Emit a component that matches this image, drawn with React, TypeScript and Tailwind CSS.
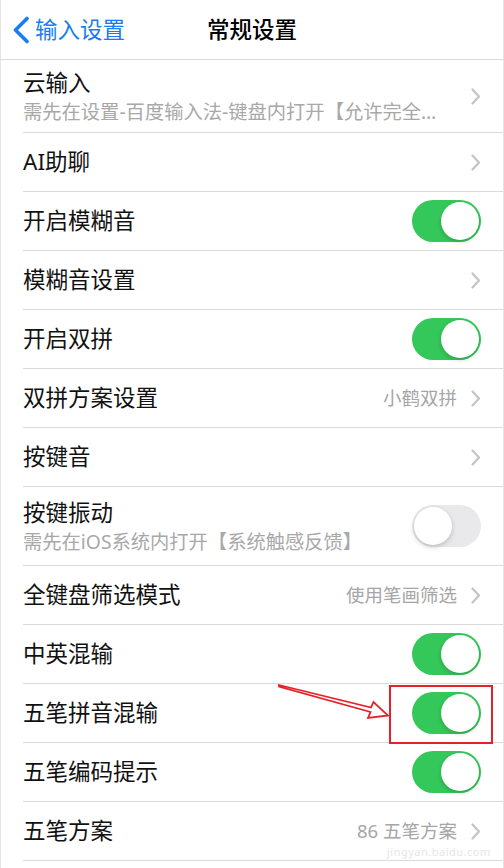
import React from "react";

type Row = {
  label: string;
  sub?: string;
  value?: string;
  toggle?: boolean;
  h: number;
};

const rows: Row[] = [
  { label: "云输入", sub: "需先在设置-百度输入法-键盘内打开【允许完全…", h: 73 },
  { label: "AI助聊", h: 59 },
  { label: "开启模糊音", toggle: true, h: 59 },
  { label: "模糊音设置", h: 59 },
  { label: "开启双拼", toggle: true, h: 59 },
  { label: "双拼方案设置", value: "小鹤双拼", h: 59 },
  { label: "按键音", h: 59 },
  { label: "按键振动", sub: "需先在iOS系统内打开【系统触感反馈】", toggle: false, h: 79 },
  { label: "全键盘筛选模式", value: "使用笔画筛选", h: 59 },
  { label: "中英混输", toggle: true, h: 59 },
  { label: "五笔拼音混输", toggle: true, h: 59 },
  { label: "五笔编码提示", toggle: true, h: 59 },
  { label: "五笔方案", value: "86 五笔方案", h: 59 },
];

const font = { fontFamily: '"Noto Sans", "Noto Sans CJK SC", sans-serif' };

const Chevron = () => (
  <svg width="10" height="17" viewBox="0 0 10 17" className="ml-[14px] shrink-0">
    <polyline points="1.5,1.5 8,8.5 1.5,15.5" fill="none" stroke="#c4c4c8" strokeWidth="2.2" strokeLinecap="round" strokeLinejoin="round" />
  </svg>
);

const Toggle = ({ on }: { on: boolean }) =>
  on ? (
    <div className="relative h-[42px] w-[69px] shrink-0 rounded-full bg-[#34c759]">
      <div className="absolute right-[2px] top-[2px] h-[38px] w-[38px] rounded-full bg-white shadow-[0_2px_4px_rgba(0,0,0,0.18)]" />
    </div>
  ) : (
    <div className="relative h-[42px] w-[69px] shrink-0 rounded-full bg-[#e9e9eb]">
      <div className="absolute left-[2px] top-[2px] h-[38px] w-[38px] rounded-full bg-white shadow-[0_2px_5px_rgba(0,0,0,0.2)]" />
    </div>
  );

export default function App() {
  return (
    <div className="relative h-[868px] w-[504px] overflow-hidden border-x border-[#e4e4e4] bg-white" style={font}>
      <header className="relative flex h-[60px] items-center border-b border-[#d8d8d8]">
        <div className="flex items-center pl-[11px] text-[22.5px] text-[#1a7cf3]">
          <svg width="18" height="28" viewBox="0 0 18 28" className="mr-[5px]">
            <polyline points="15,2.5 3.5,14 15,25.5" fill="none" stroke="#1a7cf3" strokeWidth="3.6" strokeLinecap="round" strokeLinejoin="round" />
          </svg>
          <span>输入设置</span>
        </div>
        <div className="absolute left-0 right-0 top-0 flex h-[60px] items-center justify-center text-[22.5px] font-medium text-black">
          常规设置
        </div>
      </header>

      {rows.map((r) => (
        <div key={r.label} className="pl-[22px]">
          <div className="flex items-center border-b border-[#dadada] pr-[22px]" style={{ height: r.h }}>
            <div className="flex min-w-0 flex-1 flex-col">
              <span className="text-[22.5px] leading-[30px] text-[#111]">{r.label}</span>
              {r.sub && <span className="mt-[2px] whitespace-nowrap text-[19.3px] leading-[24px] text-[#a8a8a8]">{r.sub}</span>}
            </div>
            {r.toggle !== undefined ? (
              <Toggle on={r.toggle} />
            ) : (
              <div className="flex items-center">
                {r.value && <span className="text-[18.5px] text-[#a6a6a6]">{r.value}</span>}
                <Chevron />
              </div>
            )}
          </div>
        </div>
      ))}

      <div className="pointer-events-none absolute left-[386px] top-[846px] text-[11px] leading-none tracking-[0.5px] text-[#e6e6e6]">
        jingyan.baidu.com
      </div>

      <svg className="pointer-events-none absolute left-0 top-0" width="504" height="868">
        <polygon
          points="278,685 370,707.5 372.5,702 387,715.5 367,718 369.5,712 278,686.5"
          fill="white"
          stroke="#e8202a"
          strokeWidth="1.8"
          strokeLinejoin="miter"
        />
        <rect x="389" y="686" width="102" height="57" fill="none" stroke="#e8202a" strokeWidth="2" />
      </svg>
    </div>
  );
}
